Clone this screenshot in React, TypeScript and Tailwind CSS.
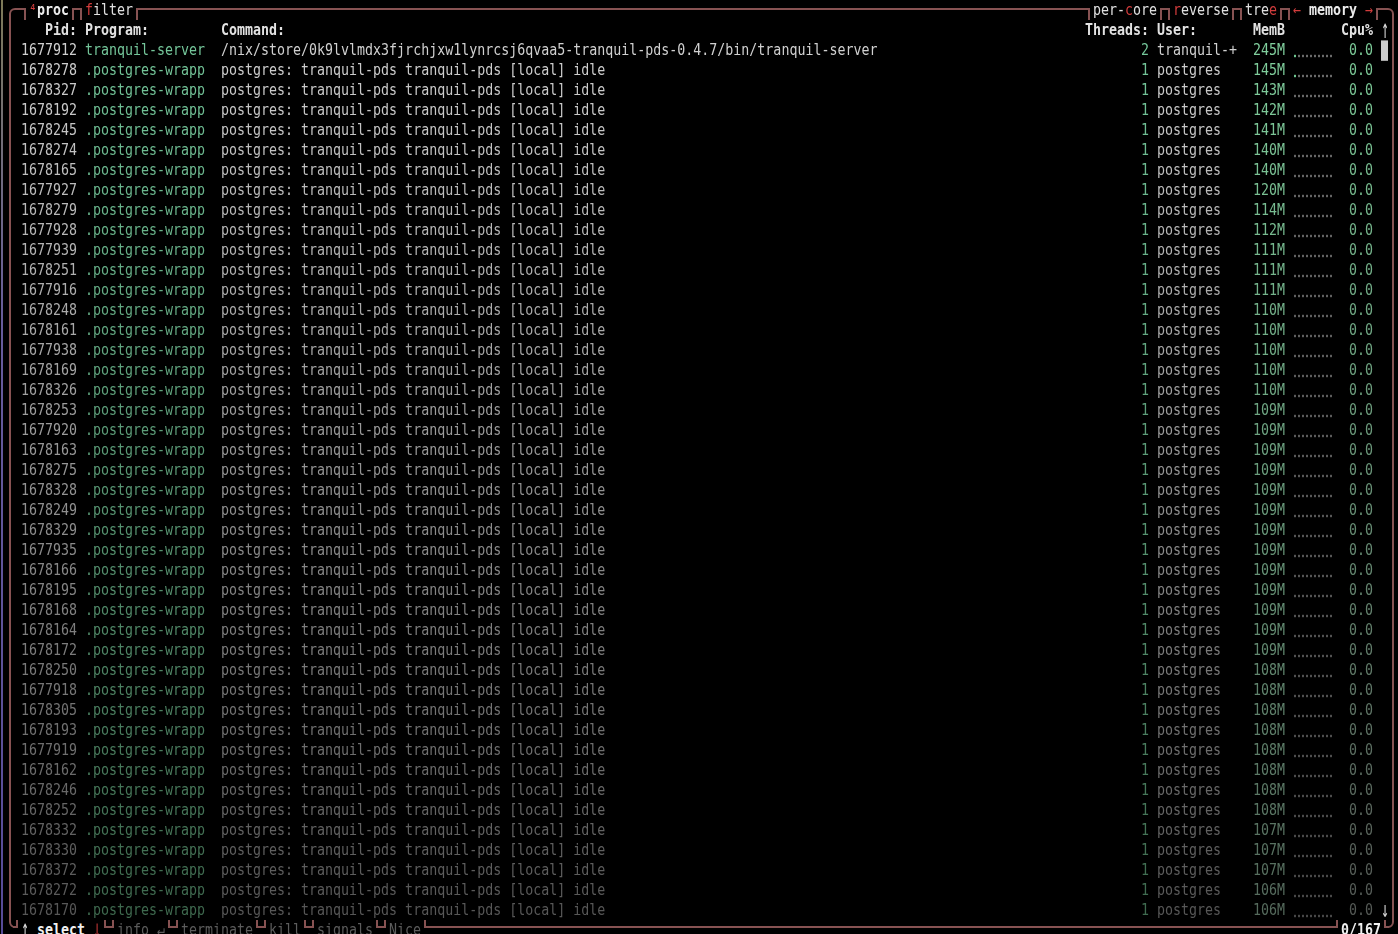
import React from 'react';

// btop process box: rows fade from bright to dim toward the bottom
const PIDS: [string, string][] = [
  ['1678278', '145M'], ['1678327', '143M'], ['1678192', '142M'], ['1678245', '141M'],
  ['1678274', '140M'], ['1678165', '140M'], ['1677927', '120M'], ['1678279', '114M'],
  ['1677928', '112M'], ['1677939', '111M'], ['1678251', '111M'], ['1677916', '111M'],
  ['1678248', '110M'], ['1678161', '110M'], ['1677938', '110M'], ['1678169', '110M'],
  ['1678326', '110M'], ['1678253', '109M'], ['1677920', '109M'], ['1678163', '109M'],
  ['1678275', '109M'], ['1678328', '109M'], ['1678249', '109M'], ['1678329', '109M'],
  ['1677935', '109M'], ['1678166', '109M'], ['1678195', '109M'], ['1678168', '109M'],
  ['1678164', '109M'], ['1678172', '109M'], ['1678250', '108M'], ['1677918', '108M'],
  ['1678305', '108M'], ['1678193', '108M'], ['1677919', '108M'], ['1678162', '108M'],
  ['1678246', '108M'], ['1678252', '108M'], ['1678332', '107M'], ['1678330', '107M'],
  ['1678372', '107M'], ['1678272', '106M'], ['1678170', '106M'],
];

type Proc = { pid: string; prog: string; cmd: string; threads: string; user: string; mem: string };

const procs: Proc[] = [
  {
    pid: '1677912',
    prog: 'tranquil-server',
    cmd: '/nix/store/0k9lvlmdx3fjrchjxw1lynrcsj6qvaa5-tranquil-pds-0.4.7/bin/tranquil-server',
    threads: '2',
    user: 'tranquil-+',
    mem: '245M',
  },
  ...PIDS.map(([pid, mem]) => ({
    pid,
    prog: '.postgres-wrapp',
    cmd: 'postgres: tranquil-pds tranquil-pds [local] idle',
    threads: '1',
    user: 'postgres',
    mem,
  })),
];

function mix(a: string, b: string, t: number) {
  const ca = [1, 3, 5].map((i) => parseInt(a.slice(i, i + 2), 16));
  const cb = [1, 3, 5].map((i) => parseInt(b.slice(i, i + 2), 16));
  const c = ca.map((v, i) => Math.round(v + (cb[i] - v) * t));
  return `rgb(${c[0]}, ${c[1]}, ${c[2]})`;
}

// small box-drawing caps around the tab labels
function CapTopL() {
  return (
    <span className="block w-[8px] h-[20px] bg-black">
      <span className="block mt-[8px] w-[5px] h-[12px] border-t-2 border-r-2 border-[#875252]" />
    </span>
  );
}
function CapTopR() {
  return (
    <span className="block w-[8px] h-[20px] bg-black">
      <span className="block ml-[3px] mt-[8px] w-[5px] h-[12px] border-t-2 border-l-2 border-[#875252]" />
    </span>
  );
}
function CapBotL() {
  return (
    <span className="block w-[8px] h-[20px] bg-black">
      <span className="block w-[5px] h-[8px] border-b-2 border-r-2 border-[#875252]" />
    </span>
  );
}
function CapBotR() {
  return (
    <span className="block w-[8px] h-[20px] bg-black">
      <span className="block ml-[3px] w-[5px] h-[8px] border-b-2 border-l-2 border-[#875252]" />
    </span>
  );
}

const lbl = 'block h-[20px] leading-[20px] bg-black whitespace-pre scale-y-[1.2]';

function Arrow({ ch }: { ch: string }) {
  return <span className="inline-block w-[8px] text-center scale-y-[1.7] scale-x-[0.9]">{ch}</span>;
}

function Graph({ i, color }: { i: number; color: string }) {
  return (
    <span className="flex w-[40px] h-[20px] items-end gap-[2px] pl-[1px] pb-[4px]">
      {Array.from({ length: 10 }).map((_, k) => (
        <span
          key={k}
          className="block w-[2px] h-[2px]"
          style={{ backgroundColor: k === 0 && i < 2 ? '#6fc58f' : color }}
        />
      ))}
    </span>
  );
}

export default function App() {
  const n = procs.length - 1;
  return (
    <div className="relative flex w-[1398px] h-[934px] overflow-hidden bg-black font-['DejaVu_Sans_Mono','Liberation_Mono',monospace] text-[13.3px] leading-[20px] text-[#d0d0d0]">
      {/* neighbouring pane edge */}
      <div className="ml-[1px] w-[2px] h-full bg-linear-to-b from-[#7d7957] via-[#675c9c] via-[35%] to-[#564b98]" />

      {/* proc box */}
      <div className="ml-[6px] mt-[8px] w-[1385px] h-[920px] shrink-0 border-2 border-[#875252] rounded-[6px] pt-[10px] pl-[10px]">
        {/* header */}
        <div className="flex h-[20px] font-bold text-[#e2e2e2] whitespace-pre scale-y-[1.2]">
          <span className="w-[56px] text-right">Pid:</span>
          <span className="w-[8px]" />
          <span className="w-[120px]">Program:</span>
          <span className="w-[16px]" />
          <span className="w-[864px]">Command:</span>
          <span className="w-[64px] text-right">Threads:</span>
          <span className="w-[8px]" />
          <span className="w-[80px]">User:</span>
          <span className="w-[48px] text-right">MemB</span>
          <span className="w-[8px]" />
          <span className="w-[40px]" />
          <span className="w-[8px]" />
          <span className="w-[32px] text-right">Cpu%</span>
          <span className="w-[8px]" />
          <span className="w-[8px] font-normal text-[#dddddd]">
            <Arrow ch="↑" />
          </span>
        </div>

        {procs.map((p, i) => {
          const t = i / n;
          const grey = mix('#d0d0d0', '#575757', t);
          const green = mix('#74c69a', '#3f6a4f', t);
          const mem = mix('#80cf9d', '#556a5c', t);
          const cpu = mix('#7ccb98', '#555a56', t);
          const dot = mix('#6a6a6a', '#474747', t);
          return (
            <div key={p.pid} className="flex h-[20px] whitespace-pre scale-y-[1.2]">
              <span className="w-[56px] text-right" style={{ color: grey }}>{p.pid}</span>
              <span className="w-[8px]" />
              <span className="w-[120px] overflow-hidden" style={{ color: green }}>{p.prog}</span>
              <span className="w-[16px]" />
              <span className="w-[864px] overflow-hidden" style={{ color: grey }}>{p.cmd}</span>
              <span className="w-[64px] text-right" style={{ color: green }}>{p.threads}</span>
              <span className="w-[8px]" />
              <span className="w-[80px] overflow-hidden" style={{ color: grey }}>{p.user}</span>
              <span className="w-[48px] text-right" style={{ color: mem }}>{p.mem}</span>
              <span className="w-[8px]" />
              <Graph i={i} color={dot} />
              <span className="w-[8px]" />
              <span className="w-[32px] text-right" style={{ color: cpu }}>0.0</span>
              <span className="w-[8px]" />
              <span className="flex w-[8px] h-[20px] items-center text-[#d0d0d0]">
                {i === 0 ? (
                  <span className="block w-[7px] h-[17px] bg-[#cccccc]" />
                ) : i === n ? (
                  <span className="block scale-y-[1.4]">↓</span>
                ) : null}
              </span>
            </div>
          );
        })}
      </div>

      {/* top-left tabs */}
      <div className="absolute top-0 left-[21px] flex h-[20px] text-[#e0e0e0]">
        <CapTopL />
        <span className={`${lbl} w-[8px] text-[#d23c3c]`}>⁴</span>
        <span className={`${lbl} w-[32px] font-bold text-[#ececec]`}>proc</span>
        <CapTopR />
        <CapTopL />
        <span className={`${lbl} w-[48px]`}>
          <span className="text-[#d23c3c]">f</span>ilter
        </span>
        <CapTopR />
      </div>

      {/* top-right tabs */}
      <div className="absolute top-0 left-[1085px] flex h-[20px] text-[#e0e0e0]">
        <CapTopL />
        <span className={`${lbl} w-[64px]`}>
          per-<span className="text-[#d23c3c]">c</span>ore
        </span>
        <CapTopR />
        <CapTopL />
        <span className={`${lbl} w-[56px]`}>
          <span className="text-[#d23c3c]">r</span>everse
        </span>
        <CapTopR />
        <CapTopL />
        <span className={`${lbl} w-[32px]`}>
          tre<span className="text-[#d23c3c]">e</span>
        </span>
        <CapTopR />
        <CapTopL />
        <span className={`${lbl} w-[80px]`}>
          <span className="text-[#d23c3c]">←</span> <span className="font-bold text-[#ececec]">memory</span>{' '}
          <span className="text-[#d23c3c]">→</span>
        </span>
        <CapTopR />
      </div>

      {/* bottom-left actions */}
      <div className="absolute top-[920px] left-[13px] flex h-[20px] text-[#5c5c5c]">
        <CapBotL />
        <span className={`${lbl} w-[80px] text-[#dcdcdc]`}>
          <Arrow ch="↑" /> <span className="font-bold text-[#f0f0f0]">select</span>{' '}
          <span className="text-[#d23c3c]">
            <Arrow ch="↓" />
          </span>
        </span>
        <CapBotR />
        <CapBotL />
        <span className={`${lbl} w-[48px]`}>info ↵</span>
        <CapBotR />
        <CapBotL />
        <span className={`${lbl} w-[72px]`}>terminate</span>
        <CapBotR />
        <CapBotL />
        <span className={`${lbl} w-[32px]`}>kill</span>
        <CapBotR />
        <CapBotL />
        <span className={`${lbl} w-[56px]`}>signals</span>
        <CapBotR />
        <CapBotL />
        <span className={`${lbl} w-[32px]`}>Nice</span>
        <CapBotR />
      </div>

      {/* bottom-right counter */}
      <div className="absolute top-[920px] left-[1333px] flex h-[20px]">
        <CapBotL />
        <span className={`${lbl} w-[40px] font-bold text-[#f0f0f0]`}>0/167</span>
        <CapBotR />
      </div>
    </div>
  );
}
